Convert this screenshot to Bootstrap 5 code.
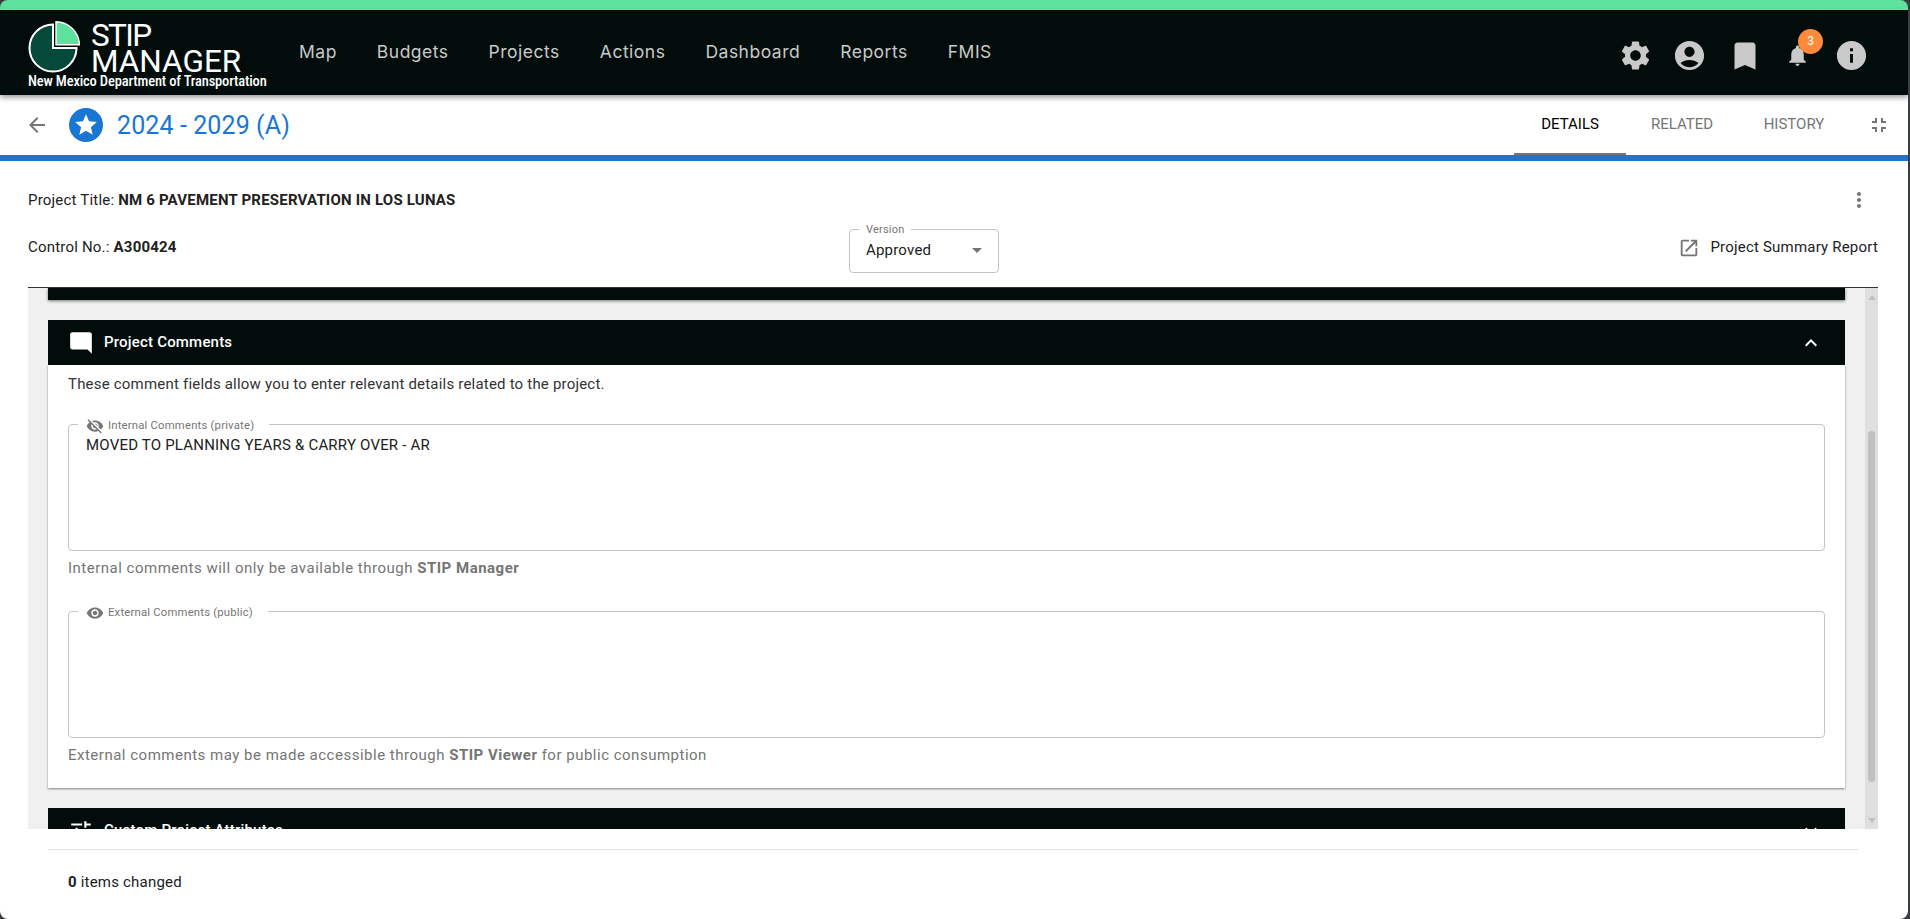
<!DOCTYPE html>
<html lang="en">
<head>
  <meta charset="UTF-8">
  <meta name="viewport" content="width=device-width, initial-scale=1.0">
  <title>STIP Manager</title>
  <link href="https://cdn.jsdelivr.net/npm/bootstrap@5.3.1/dist/css/bootstrap.min.css" rel="stylesheet">
  <style>
    html, body { height: 100%; }
    body {
      background: #3a3d40;
      font-family: Roboto, "Liberation Sans", sans-serif;
      font-size: 15px;
      letter-spacing: .2px;
      color: #212121;
      overflow: hidden;
    }
    .app-window {
      height: 919px;
      margin-right: 2px;
      background: #fff;
      border-radius: 8px;
      overflow: hidden;
    }
    svg { fill: currentColor; display: block; flex: none; }

    .top-bar {
      height: 95px;
      background: #020d0b;
      border-top: 10px solid #5fe29e;
      padding: 0 30px 0 28px;
      box-shadow: 0 2px 6px rgba(0,0,0,.45);
      position: relative;
      z-index: 2;
    }
    .brand-box { width: 271px; flex: none; color: #fff; text-decoration: none; letter-spacing: 0; padding-top: 4px; }
    .brand-name { font-size: 31.5px; line-height: 26px; margin-left: 11px; margin-top: 2px; font-weight: 400; }
    .brand-top { letter-spacing: -1.6px; }
    .brand-sub { font-size: 14.5px; font-weight: 500; font-stretch: condensed; line-height: 14px; white-space: nowrap; letter-spacing: -.15px; }
    .navbar-expand .navbar-nav .top-link { font-family: Inter, "Open Sans", sans-serif; color: #c9c9c9; font-size: 17.5px; letter-spacing: .5px; margin-right: 40px; padding: 0; }
    .top-icons { margin-top: 6px; }
    .top-icon { color: #c9c9c9; position: relative; width: 54px; display: flex; justify-content: center; }
    .top-icon.bookmark-icon svg { margin-left: 4px; }
    .bell-badge {
      position: absolute; top: -14px; right: 1px;
      width: 25px; height: 25px; line-height: 25px;
      background: #ff8a3c; color: #fff; font-size: 12px; border-radius: 50%; text-align: center; letter-spacing: 0;
    }

    .sub-bar { height: 66px; border-bottom: 6px solid #1976d2; padding: 0 17px 0 25px; }
    .star-disc { width: 34px; height: 34px; background: #1976d2; color: #fff; border-radius: 50%; margin-left: 20px; margin-right: 14px; }
    .plan-title { color: #1976d2; font-size: 25px; letter-spacing: .1px; margin-top: 2px; }
    .tab-link { color: #757575; width: 112px; height: 60px; line-height: 58px; text-align: center; text-transform: uppercase; padding: 0; border-bottom: 2px solid transparent; font-size: 15px; letter-spacing: 0; }
    .tab-link:hover { color: #757575; }
    .tab-link.on { color: #000; border-bottom-color: #757575; }
    .compress-icon { margin-left: 17px; }

    .info-block { height: 126px; padding: 0 30px 0 28px; }
    .info-row-a { height: 68px; padding-top: 28px; }
    .info-row-a svg { margin-top: -1px; margin-right: 7px; }
    .info-row-b { height: 45px; }
    .info-left { width: 821px; flex: none; padding-bottom: 8px; }
    .info-right { flex: 1 1 0; padding-bottom: 8px; }
    .report-icon { margin-right: 10px; }
    .gray-icon { color: #757575; }

    .notched { border: 1px solid #c4c4c4; border-radius: 4px; margin: 0; padding: 0; min-width: 0; }
    .notched legend {
      float: none; width: auto; margin: 0 0 0 9px; padding: 0 15px 0 8px;
      font-size: 11.3px; line-height: 18px; color: #757575; display: flex; align-items: center; gap: 4px;
      position: relative; top: 2px;
    }
    .version-box { width: 150px; height: 52px; margin-top: -10px; }
    .version-box legend { margin-left: 9px; padding: 0 7px; top: 0; font-size: 11px; }
    .version-val { padding: 0 16px 0 16px; height: 24px; }
    .caret-down { width: 0; height: 0; border-left: 5px solid transparent; border-right: 5px solid transparent; border-top: 5px solid #757575; }

    .scroll-panel { height: 542px; margin: 0 30px 0 28px; border-top: 1px solid #333; background: #f0f0f0; overflow: hidden; }
    .panel-inner { padding: 0 20px; flex: 1 1 0; min-width: 0; overflow: hidden; }
    .cut-head { height: 12px; background: #020d0b; box-shadow: 0 1px 3px rgba(0,0,0,.5); margin-bottom: 20px; }
    .sect-head { height: 45px; background: #020d0b; color: #fff; padding: 0 22px 0 20px; font-weight: 500; }
    .sect-icon { margin-right: 10px; }
    .sect-body { height: 423px; background: #fff; padding: 10px 20px 0; box-shadow: 0 1px 2px rgba(0,0,0,.45); margin-bottom: 20px; }
    .intro-line { line-height: 18px; margin-bottom: 22px; color: #333; }
    .comment-box { height: 136px; }
    .comment-box textarea { display: block; border: 0; outline: 0; resize: none; width: 100%; height: 100px; padding: 3px 17px 0; color: #212121; font-size: 15px; letter-spacing: .2px; line-height: 18px; background: transparent; }
    .hint-line { color: #757575; line-height: 18px; margin-top: 8px; margin-bottom: 25px; letter-spacing: .5px; }

    .fake-scroll { width: 13px; background: #dfdfdf; padding: 0 3px; flex: none; }
    .fake-scroll .thumb { height: 351px; margin-top: 131px; background: #c0c0c0; border-radius: 4px; }
    .tri-up, .tri-down { width: 0; height: 0; border-left: 4px solid transparent; border-right: 4px solid transparent; margin-left: -.5px; }
    .tri-up { border-bottom: 5px solid #c0c0c0; margin-top: 7px; }
    .tri-down { border-top: 5px solid #c0c0c0; margin-top: 36px; }

    .foot-bar { margin: 20px 50px 0 48px; border-top: 1px solid #e0e0e0; padding: 23px 20px 0; line-height: 18px; }
  </style>
</head>
<body>
  <div class="app-window d-flex flex-column">

    <nav class="navbar navbar-expand top-bar flex-nowrap">
      <a class="brand-box d-block" href="#">
        <div class="d-flex">
          <svg width="52" height="52" viewBox="0 0 52 52">
            <path d="M25 4V27H48.5A23.5 23.5 0 1 1 25 3.5Z" style="fill:#04493a;stroke:#fff;stroke-width:2"/>
            <path d="M28 .8A24 24 0 0 1 51.5 23.7H28Z" style="fill:#5fe29e;stroke:#fff;stroke-width:1.4"/>
          </svg>
          <div class="brand-name"><span class="brand-top">STIP</span><br>MANAGER</div>
        </div>
        <div class="brand-sub">New Mexico Department of Transportation</div>
      </a>
      <ul class="navbar-nav me-auto">
        <li class="nav-item"><a class="nav-link top-link" href="#">Map</a></li>
        <li class="nav-item"><a class="nav-link top-link" href="#">Budgets</a></li>
        <li class="nav-item"><a class="nav-link top-link" href="#">Projects</a></li>
        <li class="nav-item"><a class="nav-link top-link" href="#">Actions</a></li>
        <li class="nav-item"><a class="nav-link top-link" href="#">Dashboard</a></li>
        <li class="nav-item"><a class="nav-link top-link" href="#">Reports</a></li>
        <li class="nav-item"><a class="nav-link top-link" href="#">FMIS</a></li>
      </ul>
      <div class="d-flex align-items-center top-icons">
        <span class="top-icon"><svg width="35" height="35" viewBox="0 0 24 24"><path d="M19.14 12.94c.04-.3.06-.61.06-.94 0-.32-.02-.64-.07-.94l2.03-1.58c.18-.14.23-.41.12-.61l-1.92-3.32c-.12-.22-.37-.29-.59-.22l-2.39.96c-.5-.38-1.03-.7-1.62-.94l-.36-2.54c-.04-.24-.24-.41-.48-.41h-3.84c-.24 0-.43.17-.47.41l-.36 2.54c-.59.24-1.13.57-1.62.94l-2.39-.96c-.22-.08-.47 0-.59.22L2.74 8.87c-.12.21-.08.47.12.61l2.03 1.58c-.05.3-.09.63-.09.94s.02.64.07.94l-2.03 1.58c-.18.14-.23.41-.12.61l1.92 3.32c.12.22.37.29.59.22l2.39-.96c.5.38 1.03.7 1.62.94l.36 2.54c.05.24.24.41.48.41h3.84c.24 0 .44-.17.47-.41l.36-2.54c.59-.24 1.13-.56 1.62-.94l2.39.96c.22.08.47 0 .59-.22l1.92-3.32c.12-.22.07-.47-.12-.61l-2.01-1.58zM12 15.6c-1.98 0-3.6-1.62-3.6-3.6s1.62-3.6 3.6-3.6 3.6 1.62 3.6 3.6-1.62 3.6-3.6 3.6z"/></svg></span>
        <span class="top-icon"><svg width="35" height="35" viewBox="0 0 24 24"><path d="M12 2C6.48 2 2 6.48 2 12s4.48 10 10 10 10-4.48 10-10S17.52 2 12 2zm0 4c1.93 0 3.5 1.57 3.5 3.5S13.93 13 12 13s-3.5-1.57-3.5-3.5S10.07 6 12 6zm0 14c-2.03 0-4.43-.82-6.14-2.88C7.55 15.8 9.68 15 12 15s4.45.8 6.14 2.12C16.43 19.18 14.03 20 12 20z"/></svg></span>
        <span class="top-icon bookmark-icon"><svg width="36" height="36" viewBox="0 0 24 24"><path d="M17 3H7c-1.1 0-1.99.9-1.99 2L5 21l7-3 7 3V5c0-1.1-.9-2-2-2z"/></svg></span>
        <span class="top-icon"><svg width="25" height="25" viewBox="0 0 24 24"><path d="M12 22c1.1 0 2-.9 2-2h-4c0 1.1.89 2 2 2zm6-6v-5c0-3.07-1.64-5.64-4.5-6.32V4c0-.83-.67-1.5-1.5-1.5s-1.5.67-1.5 1.5v.68C7.63 5.36 6 7.92 6 11v5l-2 2v1h16v-1l-2-2z"/></svg><span class="bell-badge">3</span></span>
        <span class="top-icon"><svg width="35" height="35" viewBox="0 0 24 24"><path d="M12 2C6.48 2 2 6.48 2 12s4.48 10 10 10 10-4.48 10-10S17.52 2 12 2zm1 15h-2v-6h2v6zm0-8h-2V7h2v2z"/></svg></span>
      </div>
    </nav>

    <div class="sub-bar d-flex align-items-center">
      <svg class="gray-icon" width="24" height="24" viewBox="0 0 24 24"><path d="M20 11H7.83l5.59-5.59L12 4l-8 8 8 8 1.41-1.41L7.83 13H20v-2z"/></svg>
      <span class="star-disc d-flex align-items-center justify-content-center"><svg width="26" height="26" viewBox="0 0 24 24"><path d="M12 17.27L18.18 21l-1.64-7.03L22 9.24l-7.19-.61L12 2 9.19 8.63 2 9.24l5.46 4.73L5.82 21z"/></svg></span>
      <span class="plan-title me-auto">2024 - 2029 (A)</span>
      <ul class="nav">
        <li class="nav-item"><a class="nav-link tab-link on" href="#">Details</a></li>
        <li class="nav-item"><a class="nav-link tab-link" href="#">Related</a></li>
        <li class="nav-item"><a class="nav-link tab-link" href="#">History</a></li>
      </ul>
      <svg class="gray-icon compress-icon" width="24" height="24" viewBox="0 0 24 24"><path d="M5 16h3v3h2v-5H5v2zm3-8H5v2h5V5H8v3zm6 11h2v-3h3v-2h-5v5zm2-11V5h-2v5h5V8h-3z"/></svg>
    </div>

    <div class="info-block">
      <div class="info-row-a d-flex justify-content-between">
        <div>Project Title: <b>NM 6 PAVEMENT PRESERVATION IN LOS LUNAS</b></div>
        <svg class="gray-icon" width="24" height="24" viewBox="0 0 24 24"><path d="M12 8c1.1 0 2-.9 2-2s-.9-2-2-2-2 .9-2 2 .9 2 2 2zm0 2c-1.1 0-2 .9-2 2s.9 2 2 2 2-.9 2-2-.9-2-2-2zm0 6c-1.1 0-2 .9-2 2s.9 2 2 2 2-.9 2-2-.9-2-2-2z"/></svg>
      </div>
      <div class="info-row-b d-flex align-items-center">
        <div class="info-left">Control No.: <b>A300424</b></div>
        <fieldset class="notched version-box">
          <legend>Version</legend>
          <div class="version-val d-flex align-items-center justify-content-between"><span>Approved</span><span class="caret-down"></span></div>
        </fieldset>
        <div class="info-right d-flex align-items-center justify-content-end">
          <svg class="gray-icon report-icon" width="22" height="22" viewBox="0 0 24 24"><path d="M19 19H5V5h7V3H5c-1.11 0-2 .9-2 2v14c0 1.1.89 2 2 2h14c1.1 0 2-.9 2-2v-7h-2v7zM14 3v2h3.59l-9.83 9.83 1.41 1.41L19 6.41V10h2V3h-7z"/></svg>
          <span>Project Summary Report</span>
        </div>
      </div>
    </div>

    <div class="scroll-panel d-flex">
      <div class="panel-inner">
        <div class="cut-head"></div>

        <div class="sect-head d-flex align-items-center">
          <svg width="26" height="26" class="sect-icon" viewBox="0 0 24 24"><path d="M22 4c0-1.1-.9-2-2-2H4c-1.1 0-2 .9-2 2v12c0 1.1.9 2 2 2h14l4 4V4z"/></svg>
          <span class="me-auto">Project Comments</span>
          <svg width="24" height="24" viewBox="0 0 24 24"><path d="M12 8l-6 6 1.41 1.41L12 10.83l4.59 4.58L18 14z"/></svg>
        </div>
        <div class="sect-body">
          <div class="intro-line">These comment fields allow you to enter relevant details related to the project.</div>
          <fieldset class="notched comment-box">
            <legend><svg width="18" height="18" viewBox="0 0 24 24"><path d="M12 7c2.76 0 5 2.24 5 5 0 .65-.13 1.26-.36 1.83l2.92 2.92c1.51-1.26 2.7-2.89 3.43-4.75-1.73-4.39-6-7.5-11-7.5-1.4 0-2.74.25-3.98.7l2.16 2.16C10.74 7.13 11.35 7 12 7zM2 4.27l2.28 2.28.46.46C3.08 8.3 1.78 10.02 1 12c1.73 4.39 6 7.5 11 7.5 1.55 0 3.03-.3 4.38-.84l.42.42L19.73 22 21 20.73 3.27 3 2 4.27zM7.53 9.8l1.55 1.55c-.05.21-.08.43-.08.65 0 1.66 1.34 3 3 3 .22 0 .44-.03.65-.08l1.55 1.55c-.67.33-1.41.53-2.2.53-2.76 0-5-2.24-5-5 0-.79.2-1.53.53-2.2zm4.31-.78l3.15 3.15.02-.16c0-1.66-1.34-3-3-3l-.17.01z"/></svg>Internal Comments (private)</legend>
            <textarea readonly>MOVED TO PLANNING YEARS &amp; CARRY OVER - AR</textarea>
          </fieldset>
          <div class="hint-line">Internal comments will only be available through <b>STIP Manager</b></div>
          <fieldset class="notched comment-box">
            <legend><svg width="18" height="18" viewBox="0 0 24 24"><path d="M12 4.5C7 4.5 2.73 7.61 1 12c1.73 4.39 6 7.5 11 7.5s9.27-3.11 11-7.5c-1.73-4.39-6-7.5-11-7.5zM12 17c-2.76 0-5-2.24-5-5s2.24-5 5-5 5 2.24 5 5-2.24 5-5 5zm0-8c-1.66 0-3 1.34-3 3s1.34 3 3 3 3-1.34 3-3-1.34-3-3-3z"/></svg>External Comments (public)</legend>
            <textarea readonly></textarea>
          </fieldset>
          <div class="hint-line">External comments may be made accessible through <b>STIP Viewer</b> for public consumption</div>
        </div>

        <div class="sect-head d-flex align-items-center">
          <svg width="26" height="26" class="sect-icon" viewBox="0 0 24 24"><path d="M3 17v2h6v-2H3zM3 5v2h10V5H3zm10 16v-2h8v-2h-8v-2h-2v6h2zM7 9v2H3v2h4v2h2V9H7zm14 4v-2H11v2h10zm-6-4h2V7h4V5h-4V3h-2v6z"/></svg>
          <span class="me-auto">Custom Project Attributes</span>
          <svg width="24" height="24" viewBox="0 0 24 24"><path d="M16.59 8.59L12 13.17 7.41 8.59 6 10l6 6 6-6z"/></svg>
        </div>
      </div>
      <div class="fake-scroll">
        <div class="tri-up"></div>
        <div class="thumb"></div>
        <div class="tri-down"></div>
      </div>
    </div>

    <div class="foot-bar"><b>0</b> items changed</div>
  </div>
  <script src="https://cdn.jsdelivr.net/npm/bootstrap@5.3.1/dist/js/bootstrap.bundle.min.js"></script>
</body>
</html>
